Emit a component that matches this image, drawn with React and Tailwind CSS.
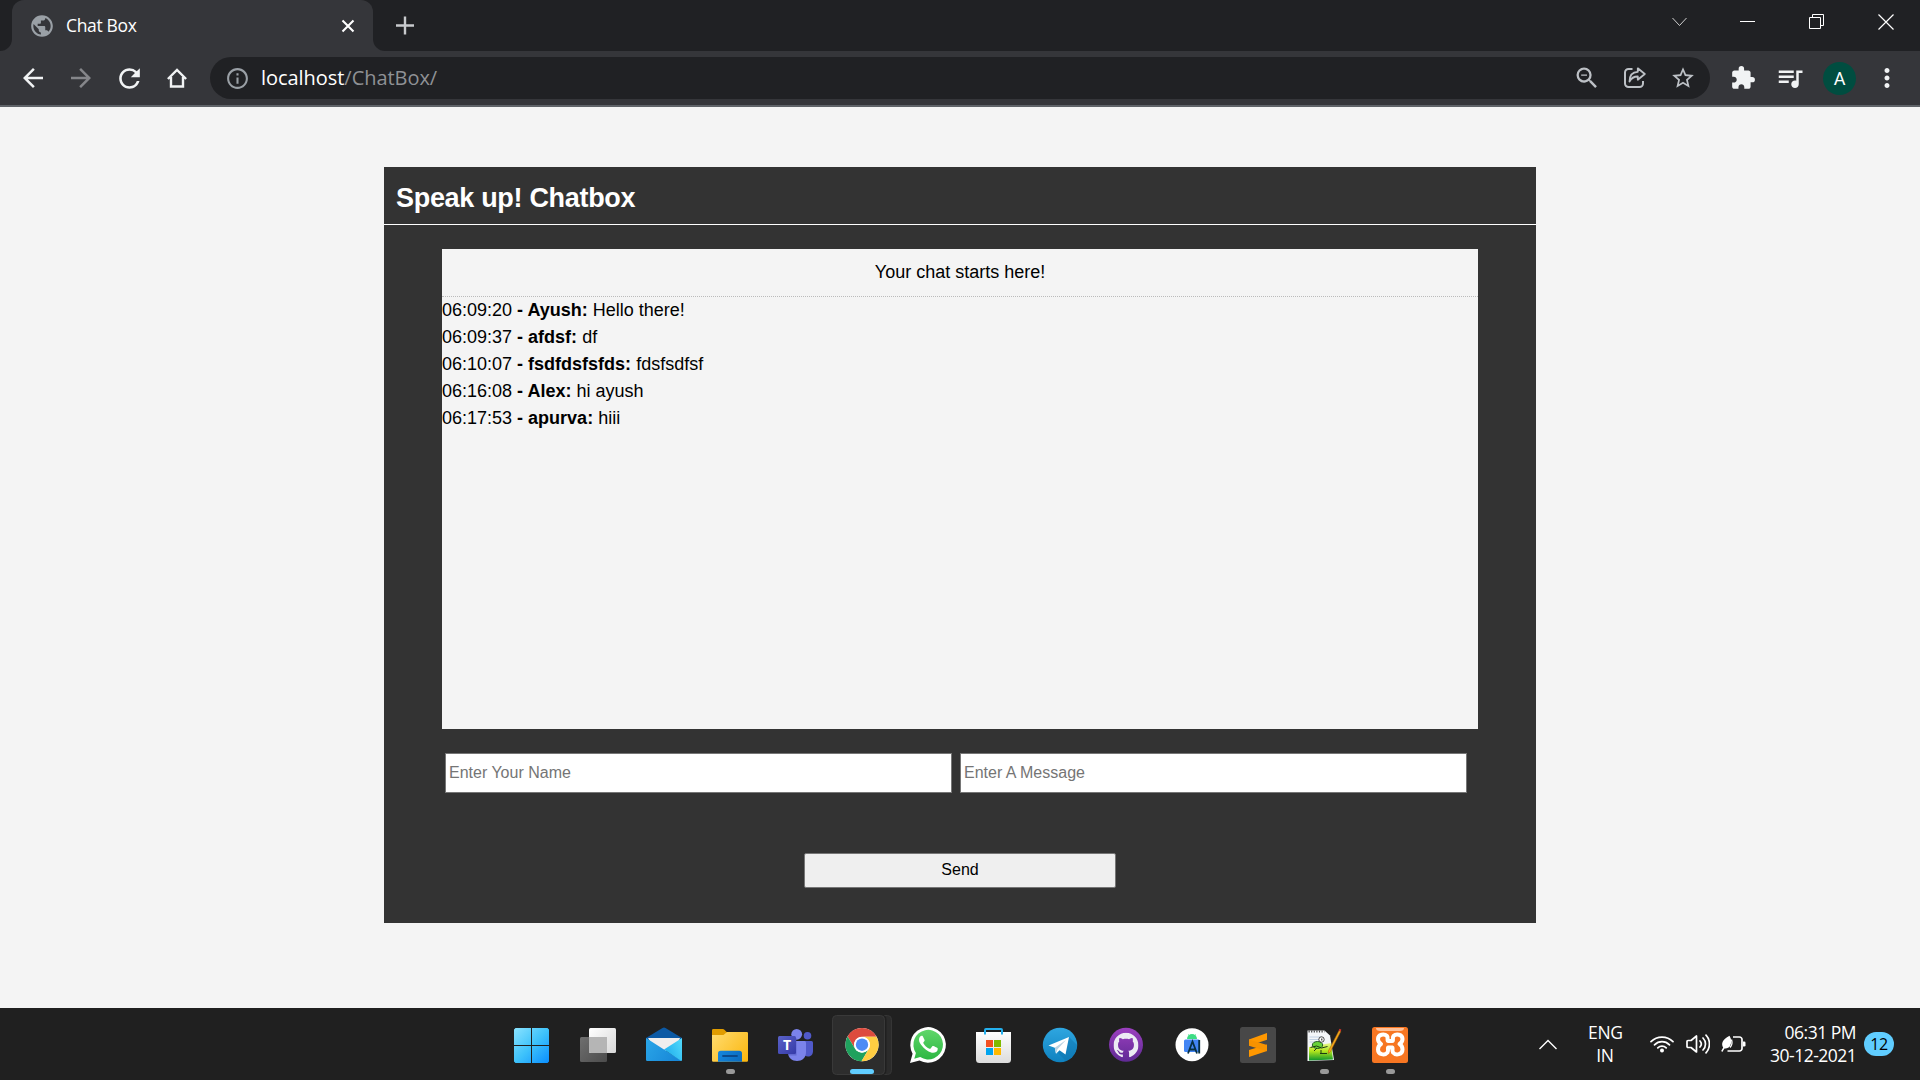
import React from "react";
import {
  MdArrowBack,
  MdArrowForward,
  MdRefresh,
  MdInfoOutline,
  MdZoomOut,
  MdStarBorder,
  MdExtension,
  MdQueueMusic,
  MdMoreVert,
  MdPublic,
} from "react-icons/md";
import { SiGithub } from "react-icons/si";

const messages = [
  { time: "06:09:20", name: "Ayush", text: "Hello there!" },
  { time: "06:09:37", name: "afdsf", text: "df" },
  { time: "06:10:07", name: "fsdfdsfsfds", text: "fdsfsdfsf" },
  { time: "06:16:08", name: "Alex", text: "hi ayush" },
  { time: "06:17:53", name: "apurva", text: "hiii" },
];

function TabStrip() {
  return (
    <div className="flex h-[51px] items-stretch bg-[#202124] text-white">
      <div className="flex w-3 items-end bg-[#35363a]">
        <div className="h-full w-full rounded-br-xl bg-[#202124]" />
      </div>
      <div className="bg-[#202124]">
        <div className="flex h-[51px] w-[361px] items-center rounded-t-xl bg-[#35363a] pl-[17px] pr-[18px]">
          <MdPublic className="size-[26px] text-[#9aa0a6]" />
          <span className="ml-[11px] pb-[2px] text-[17.5px] leading-[24px] tracking-[-0.35px] whitespace-nowrap">Chat Box</span>
          <svg className="ml-auto size-[14px]" viewBox="0 0 14 14" stroke="#fff" strokeWidth="2.1">
            <path d="M1.5 1.5l11 11M12.5 1.5l-11 11" />
          </svg>
        </div>
      </div>
      <div className="flex flex-1 bg-[#35363a]">
        <div className="flex flex-1 rounded-bl-xl bg-[#202124]">
          <svg className="mt-4 ml-[23px] h-[19px] w-[18px]" viewBox="0 0 18 19" stroke="#c8cacd" strokeWidth="2.4">
            <path d="M0 9.5h18M9 .5v18" />
          </svg>
          <div className="ml-auto flex h-[43px] items-center pr-[26px]">
            <svg className="mr-[53px] h-[10px] w-[15px]" viewBox="0 0 15 10" fill="none" stroke="#d0d0d0" strokeWidth="1">
              <path d="M.5 1l7 7.5 7-7.5" />
            </svg>
            <svg className="mr-[54px] h-[15px] w-[15px]" viewBox="0 0 15 15" fill="#fff">
              <path d="M0 7h15v1H0z" />
            </svg>
            <svg className="mr-[53px] size-[16px]" viewBox="0 0 16 16" fill="none" stroke="#fff">
              <path d="M.5 3.5h11v11H.5zM3.5 3.5v-3h11v11h-3" />
            </svg>
            <svg className="size-[16px]" viewBox="0 0 16 16" stroke="#fff" strokeWidth="1.2">
              <path d="M.5.5l15 15M15.5.5l-15 15" />
            </svg>
          </div>
        </div>
      </div>
    </div>
  );
}

function Toolbar() {
  return (
    <div className="flex h-[56px] items-start border-b-2 border-[#5f6368] bg-[#35363a] pt-[6px] text-[#f1f3f4]">
      <div className="flex h-[42px] items-center pl-[18px]">
        <MdArrowBack className="size-[30px]" />
        <MdArrowForward className="ml-[18px] size-[30px] text-[#85868a]" />
        <MdRefresh className="ml-[18px] size-[31px]" />
        <svg className="ml-[22px] size-[20px]" viewBox="0 0 20 20" fill="none" stroke="currentColor" strokeWidth="2.4">
          <path d="M.9 11L10 2l9.100 9M4 9v9.500h12V9" />
        </svg>
      </div>
      <div className="ml-[23px] flex h-[42px] w-[1500px] items-center rounded-full bg-[#202124] pl-[15px] pr-[14px]">
        <MdInfoOutline className="size-[25px] text-[#9aa0a6]" />
        <span className="ml-[11px] text-[20px] leading-[28px] tracking-[-0.05px] whitespace-nowrap text-white">
          localhost<span className="text-[#8f9195]">/ChatBox/</span>
        </span>
        <MdZoomOut className="ml-auto size-[28px] text-[#bdc1c6]" />
        <svg className="ml-[23px] size-[22px]" viewBox="0 0 22 22" fill="none" stroke="#bdc1c6" strokeWidth="2" strokeLinejoin="round">
          <path d="M8.500 2H4.500A3.500 3.500 0 0 0 1 5.500v11A3.500 3.500 0 0 0 4.500 20h11a3.500 3.500 0 0 0 3.500-3.500V14" />
          <path d="M5.500 14.500C5.500 8.500 8 5 13.800 4.800V1.300l7 5.700-7 5.700V9.500c-4 0-6.500 1.500-8.300 5z" strokeWidth="1.800" />
        </svg>
        <MdStarBorder className="ml-[24px] size-[26px] text-[#bdc1c6]" />
      </div>
      <div className="flex h-[42px] items-center">
        <MdExtension className="ml-[20px] size-[26px]" />
        <MdQueueMusic className="ml-[19px] size-[30px]" />
        <div className="ml-[18px] flex size-[33px] items-center justify-center rounded-full bg-[#004d40] font-[Roboto] text-[18px] text-white">
          A
        </div>
        <MdMoreVert className="ml-[16px] size-[30px]" />
      </div>
    </div>
  );
}

function ChatBox() {
  return (
    <main className="flex-1 bg-[#f4f4f4] pt-[60px] font-['Liberation_Sans',Arial,sans-serif]">
      <section className="mx-auto flex h-[756px] w-[1152px] flex-col bg-[#333333]">
        <header className="flex h-[58px] items-center border-b border-white pt-[5px] pl-3">
          <h1 className="text-[27px] leading-[32px] font-bold tracking-[-0.31px] whitespace-nowrap text-white">Speak up! Chatbox</h1>
        </header>
        <div className="mx-auto mt-6 h-[480px] w-[1036px] bg-[#f4f4f4] text-[18px] leading-[27px] text-black">
          <div className="flex h-12 items-center justify-center border-b border-dotted border-[#bbbbbb]">
            Your chat starts here!
          </div>
          <ul>
            {messages.map((m) => (
              <li key={m.time} className="h-[27px] leading-[26px] whitespace-nowrap">
                {m.time} <b>- {m.name}:</b> {m.text}
              </li>
            ))}
          </ul>
        </div>
        <form className="flex flex-col">
          <div className="mt-6 flex gap-2 pl-[61px]">
            <input
              className="h-10 w-[507px] border border-[#767676] bg-white px-[3px] text-[16px] placeholder:text-[#757575]"
              placeholder="Enter Your Name"
            />
            <input
              className="h-10 w-[507px] border border-[#767676] bg-white px-[3px] text-[16px] placeholder:text-[#757575]"
              placeholder="Enter A Message"
            />
          </div>
          <button
            type="button"
            className="mx-auto mt-[60px] h-[35px] w-[312px] rounded-[2px] border border-[#767676] bg-[#efefef] pb-[2px] text-[16px] text-black"
          >
            Send
          </button>
        </form>
      </section>
    </main>
  );
}

function Icon({ children, running }) {
  return (
    <svg className="h-[72px] w-[66px] shrink-0" viewBox="0 0 66 72" fill="none">
      {children}
      {running && <rect x="30" y="61" width="9" height="5" rx="2.5" fill="#999" />}
    </svg>
  );
}

function TaskbarApps() {
  return (
    <div className="flex pl-[498px]">
      {/* Start */}
      <Icon>
        <defs>
          <linearGradient id="win" x1="16" y1="20" x2="51" y2="55" gradientUnits="userSpaceOnUse">
            <stop stopColor="#8be3ff" />
            <stop offset=".5" stopColor="#3fc3fb" />
            <stop offset="1" stopColor="#0a8eff" />
          </linearGradient>
        </defs>
        <path d="M17.500 20H33v17H16V21.500zM34 20h15.500l1.500 1.500V37H34zM16 38h17v17H17.500L16 53.500zM34 38h17v15.500L49.500 55H34z" fill="url(#win)" />
      </Icon>
      {/* Task view */}
      <Icon>
        <defs>
          <linearGradient id="tvl" x1="25" y1="20" x2="52" y2="45" gradientUnits="userSpaceOnUse">
            <stop stopColor="#fff" />
            <stop offset="1" stopColor="#d8d8d8" />
          </linearGradient>
          <linearGradient id="tvd" x1="16" y1="29" x2="43" y2="54" gradientUnits="userSpaceOnUse">
            <stop stopColor="#6f6f6f" />
            <stop offset="1" stopColor="#4c4c4c" />
          </linearGradient>
        </defs>
        <rect x="16" y="29" width="27" height="25" rx="1.500" fill="url(#tvd)" />
        <rect x="25" y="20" width="27" height="25" rx="1.500" fill="url(#tvl)" />
        <path d="M25 29h18v16H26.500L25 43.500z" fill="#b5b5b5" />
      </Icon>
      {/* Mail */}
      <Icon>
        <defs>
          <linearGradient id="mail" x1="16" y1="30" x2="52" y2="53" gradientUnits="userSpaceOnUse">
            <stop stopColor="#2aa6e8" />
            <stop offset="1" stopColor="#1583d6" />
          </linearGradient>
          <linearGradient id="mail2" x1="36" y1="42" x2="52" y2="34" gradientUnits="userSpaceOnUse">
            <stop stopColor="#27b3ee" />
            <stop offset="1" stopColor="#4fd8fb" />
          </linearGradient>
        </defs>
        <path d="M16 30l16.500-10q1.500-.8 3 0L52 30v4H16z" fill="#0c59a4" />
        <path d="M18 30h32l-2 5-14 9-13-9z" fill="#f0eeee" />
        <path d="M16 30l36 23H17.200A1.200 1.200 0 0 1 16 51.800z" fill="url(#mail)" />
        <path d="M52 30v21.800a1.200 1.200 0 0 1-.8 1.100L34 41.500z" fill="url(#mail2)" />
      </Icon>
      {/* File explorer */}
      <Icon running>
        <defs>
          <linearGradient id="fold" x1="16" y1="24" x2="52" y2="54" gradientUnits="userSpaceOnUse">
            <stop stopColor="#ffdc70" />
            <stop offset="1" stopColor="#fbb60d" />
          </linearGradient>
          <linearGradient id="foldb" x1="22" y1="43" x2="44" y2="54" gradientUnits="userSpaceOnUse">
            <stop stopColor="#1587dd" />
            <stop offset="1" stopColor="#0a6cc0" />
          </linearGradient>
        </defs>
        <path d="M16 22.200a1.200 1.200 0 0 1 1.200-1.200h9.500q1 0 2 1l3 3V34H16z" fill="#e09c00" />
        <path d="M16 27h11.500l3.500-3h19.800a1.200 1.200 0 0 1 1.200 1.200v27.300a1.200 1.200 0 0 1-1.200 1.200H17.200A1.200 1.200 0 0 1 16 52.500z" fill="url(#fold)" />
        <path d="M22 53.700V45.500a2.700 2.700 0 0 1 2.700-2.700h18.600a2.700 2.700 0 0 1 2.700 2.700v8.200z" fill="url(#foldb)" />
        <path d="M27 48h14" stroke="#0a4a8c" strokeWidth="1.800" strokeLinecap="round" />
      </Icon>
      {/* Teams */}
      <Icon>
        <defs>
          <linearGradient id="tms" x1="16" y1="28" x2="34" y2="46" gradientUnits="userSpaceOnUse">
            <stop stopColor="#5a62c8" />
            <stop offset="1" stopColor="#353aa8" />
          </linearGradient>
        </defs>
        <circle cx="45.500" cy="27.700" r="3.800" fill="#5059c9" />
        <path d="M40 33h9.500A1.500 1.500 0 0 1 51 34.500V43c0 7-8 7-11 2z" fill="#5059c9" />
        <circle cx="34.700" cy="26.300" r="5.400" fill="#7b83eb" />
        <path d="M26 33h16.500A1.500 1.500 0 0 1 44 34.500V44c0 6-4 9-9 9s-9-3-9-9z" fill="#7b83eb" />
        <path d="M27 30h7.500v17.500H26.300z" fill="#4a50b8" opacity=".5" />
        <rect x="16" y="28" width="18" height="18" rx="1.500" fill="url(#tms)" />
        <text x="25" y="42" textAnchor="middle" fontSize="14" fontWeight="700" fill="#fff" fontFamily="Open Sans, sans-serif">T</text>
      </Icon>
      {/* Chrome, active */}
      <Icon>
        <rect x="44" y="7.500" width="19.500" height="59" rx="4" fill="#2b2b2b" stroke="#353535" />
        <rect x="3.500" y="6.500" width="55" height="61" rx="5" fill="#202020" />
        <rect x="4.500" y="7.500" width="52" height="59" rx="4" fill="#2d2d2d" stroke="#393939" />
        <circle cx="34" cy="36.700" r="16.600" fill="#fff" />
        <path d="M34 28.700h14.500A16.600 16.600 0 0 0 19.600 28.400l7.500 12.300A8 8 0 0 1 34 28.700z" fill="#dd4b3e" />
        <path d="M27.100 40.700L19.600 28.400A16.600 16.600 0 0 0 33.500 53.300l7.400-12.600a8 8 0 0 1-13.800 0z" fill="#1fa15d" />
        <path d="M34 28.700h14.500A16.600 16.600 0 0 1 33.500 53.300l7.400-12.600A8 8 0 0 0 34 28.700z" fill="#ffcd42" />
        <circle cx="34" cy="36.700" r="7.800" fill="#fff" />
        <circle cx="34" cy="36.700" r="6.200" fill="#4c8bf5" />
        <rect x="22" y="61" width="24" height="5" rx="2.500" fill="#60cdff" />
      </Icon>
      {/* WhatsApp */}
      <Icon>
        <defs>
          <linearGradient id="wa" x1="34" y1="22" x2="34" y2="52" gradientUnits="userSpaceOnUse">
            <stop stopColor="#5fd669" />
            <stop offset="1" stopColor="#2cb742" />
          </linearGradient>
        </defs>
        <path d="M16 55l2.600-9.300A17.800 17.800 0 1 1 25.500 52.500z" fill="#fff" />
        <path d="M20.300 50.700l1.600-5.800A14.800 14.800 0 1 1 26.200 49.100z" fill="url(#wa)" />
        <path d="M28.900 28.500c-.4-.8-.7-.8-1.200-.8-1 0-2.700 1.300-2.700 4 0 2.200 1.700 4.600 2.500 5.600 2.700 3.600 5.700 6.200 10.300 7.400 2.800.7 5.300-1 5.700-2.400.3-1.200.3-2 0-2.200-.7-.5-3.400-1.800-4.200-2-.5-.1-.8 0-1.200.5l-1.500 1.900c-.4.400-.7.400-1.200.2-2.700-1.200-4.600-3-6-5.400-.3-.5-.2-.8.100-1.100.9-1 1.300-1.600 1.100-2.300z" fill="#fff" />
      </Icon>
      {/* Microsoft Store */}
      <Icon>
        <defs>
          <linearGradient id="bag" x1="34" y1="24" x2="34" y2="55" gradientUnits="userSpaceOnUse">
            <stop stopColor="#fff" />
            <stop offset="1" stopColor="#dcdcdc" />
          </linearGradient>
        </defs>
        <path d="M16 24h35v27.500a3.500 3.500 0 0 1-3.500 3.500h-28a3.500 3.500 0 0 1-3.500-3.500z" fill="url(#bag)" />
        <path d="M25 26.500V22a1 1 0 0 1 1-1h15a1 1 0 0 1 1 1v4.500" stroke="#24b0ee" strokeWidth="2" />
        <path d="M26 32h7v7h-7z" fill="#f25022" />
        <path d="M34 32h7v7h-7z" fill="#7fba00" />
        <path d="M26 40h7v7h-7z" fill="#00a4ef" />
        <path d="M34 40h7v7h-7z" fill="#ffb900" />
      </Icon>
      {/* Telegram */}
      <Icon>
        <defs>
          <linearGradient id="tg" x1="34" y1="20" x2="34" y2="54" gradientUnits="userSpaceOnUse">
            <stop stopColor="#2ea6e0" />
            <stop offset="1" stopColor="#0f82c0" />
          </linearGradient>
        </defs>
        <circle cx="34" cy="37" r="17.200" fill="url(#tg)" />
        <path d="M43 29l8 8c0 8-6 14-11 16l-8-8z" fill="#0d6fa8" opacity=".4" />
        <path d="M22.500 37.500L43 29l-3.500 17.500-6-4.200-3.500 3.500-1.200-6z" fill="#fff" />
        <path d="M28.800 39.800L40 32l-8.500 9.300-1.500 4.500z" fill="#b9d3e3" />
      </Icon>
      {/* GitHub Desktop */}
      <Icon>
        <defs>
          <linearGradient id="gh" x1="34" y1="20" x2="34" y2="54" gradientUnits="userSpaceOnUse">
            <stop stopColor="#9b3fbf" />
            <stop offset="1" stopColor="#5f2a94" />
          </linearGradient>
        </defs>
        <circle cx="34" cy="36.700" r="17" fill="url(#gh)" />
        <SiGithub x="21.500" y="24.500" size={25} color="#ececf4" />
      </Icon>
      {/* Android Studio */}
      <Icon>
        <circle cx="34" cy="36.700" r="16.500" fill="#fff" />
        <path d="M29 31a5 5 0 0 1 10 0z" fill="#3ddc84" />
        <path d="M30.500 26.500l1 1.600M37.500 26.500l-1 1.600" stroke="#3ddc84" />
        <rect x="26" y="31.500" width="16" height="12.500" rx="1.500" fill="#4285f4" />
        <path d="M30 45.500l4.500-12 4.500 12M31.500 41.500h6" stroke="#073042" strokeWidth="1.800" />
        <path d="M41.200 32v13.500" stroke="#073042" strokeWidth="1.900" />
      </Icon>
      {/* Sublime Text */}
      <Icon>
        <rect x="16" y="19" width="36" height="36" rx="2.500" fill="#484848" />
        <path d="M25 31.500L43 25v6.800l-18 6z" fill="#ff9800" />
        <path d="M25 42L43 36.500v6.500L25 49z" fill="#ff9800" />
        <path d="M25 31.500L43 37v6.300l-18-5.500z" fill="#f79200" />
      </Icon>
      {/* Notepad++ */}
      <Icon running>
        <defs>
          <linearGradient id="npp" x1="30" y1="34" x2="30" y2="52" gradientUnits="userSpaceOnUse">
            <stop stopColor="#f2fb9c" />
            <stop offset=".5" stopColor="#b5e61d" />
            <stop offset="1" stopColor="#159a2c" />
          </linearGradient>
        </defs>
        <path d="M17.500 22.500H34.500L40 27.500l4 24.500-26.500 1z" fill="#f4f6f8" />
        <path d="M18.500 23.500h16" stroke="#444" strokeWidth="2" strokeDasharray="1.200 1.400" />
        <path d="M19.500 29h12M19.500 31.500h10M19.500 34h8" stroke="#b5c9de" strokeWidth=".8" />
        <path d="M19 39l22-4 2 16.500-24 1z" fill="url(#npp)" />
        <ellipse cx="27.500" cy="37" rx="5.200" ry="3.500" fill="#68d13a" stroke="#17501b" strokeWidth=".9" />
        <circle cx="31.500" cy="31.500" r="2.700" fill="#fff" stroke="#222" strokeWidth=".8" />
        <path d="M31.800 30.500v2" stroke="#222" strokeWidth="1.100" />
        <path d="M20.500 39.500l6-1.500 5 2 6-1.500M24 43l3-3M30 45.500h7M31 42v4" stroke="#1d3b12" strokeWidth="1" />
        <path d="M49 22.500l1.800 1-10.500 20.300-2 1.700.2-2.700z" fill="#f4a91c" stroke="#a35d0a" strokeWidth=".5" />
        <path d="M48.600 22.500l1-1.700 1.800 1-.9 1.700z" fill="#d9362b" />
      </Icon>
      {/* XAMPP */}
      <Icon running>
        <rect x="16" y="19" width="36" height="36" rx="2.500" fill="#f77622" />
        <path d="M20 20h28q0 3-4 3H24q-4 0-4-3z" fill="#ffc29a" />
        <path
          d="M31 28c-2.500-2.500-9-2-9 3 0 2.500 1 3.800 3 5-2 1.200-3 2.800-3 5.500 0 5 6.500 6.500 9.500 3 1.500-2.500-.5-4.500 1-5h3.500c1.500.5-.5 2.500 1 5 3 3.500 9.500 2 9.500-3 0-2.700-1-4.300-3-5.500 2-1.200 3-2.500 3-5 0-5-6.500-5.500-9-3-1.500 2 .5 4.800-1.500 5h-3.500c-2-.2 0-3-1.500-5z"
          stroke="#fff"
          strokeWidth="4"
          strokeLinejoin="round"
        />
      </Icon>
    </div>
  );
}

function Tray() {
  return (
    <div className="ml-auto flex h-[72px] items-center text-[17px] text-white">
      <svg className="mr-[31px] h-[11px] w-[18px]" viewBox="0 0 18 11" fill="none" stroke="#fff" strokeWidth="1.400">
        <path d="M.5 10L9 1.500l8.500 8.500" />
      </svg>
      <div className="w-[34px] text-center text-[17.5px] leading-[23px] tracking-[-0.3px] whitespace-nowrap">
        ENG
        <br />
        IN
      </div>
      <svg className="ml-[28px] h-[18px] w-[24px]" viewBox="0 0 24 18" fill="none" stroke="#fff" strokeWidth="1.700" strokeLinecap="round">
        <path d="M1 6.700a15.500 15.500 0 0 1 22 0M4.500 9.800a10.600 10.600 0 0 1 15 0M7.800 12.800a6 6 0 0 1 8.400 0" />
        <circle cx="12" cy="15.500" r="2" fill="#fff" stroke="none" />
      </svg>
      <svg className="ml-[12px] h-[20px] w-[24px]" viewBox="0 0 24 20" fill="none" stroke="#fff" strokeWidth="1.700" strokeLinecap="round" strokeLinejoin="round">
        <path d="M1 7.500a1 1 0 0 1 1-1h3L10.500 2v16L5 13.500H2a1 1 0 0 1-1-1zM14 7a4.500 4.500 0 0 1 0 6M17 4a8.500 8.500 0 0 1 0 12M20 1.200a13 13 0 0 1 0 17.600" />
      </svg>
      <svg className="ml-[11px] h-[18px] w-[25px]" viewBox="0 0 25 18" fill="none" stroke="#fff" strokeWidth="1.700" strokeLinejoin="round">
        <path d="M12 2h6.500A2.500 2.500 0 0 1 21 4.500v9a2.500 2.500 0 0 1-2.500 2.500H6.500" />
        <path d="M22 6.500h1.200q1.300 0 1.300 1.200v2.600q0 1.200-1.300 1.200H22z" fill="#fff" stroke="none" />
        <path d="M8.500.8c2 3.200 2.300 7 .7 10-1.200 2.200-3.500 3-5.700 2.700L1.300 17 .2 16l2-3.400C0 9 1 4.500 8.500.8z" fill="#fff" stroke="none" />
        <path d="M10.500 4.500q1.500 5-1.500 8" strokeWidth="1.300" />
      </svg>
      <div className="ml-[24px] w-[86px] text-right text-[17.5px] leading-[23px] tracking-[-0.5px] whitespace-nowrap">
        06:31 PM
        <br />
        30-12-2021
      </div>
      <div className="mr-[26px] ml-[8px] flex h-6 w-[30px] items-center justify-center rounded-full bg-[#60cdff] text-[16px] tracking-[-0.4px] text-black">
        12
      </div>
    </div>
  );
}

export default function App() {
  return (
    <div className="flex h-[1080px] w-[1920px] flex-col overflow-hidden font-['Open_Sans','Noto_Sans',sans-serif]">
      <TabStrip />
      <Toolbar />
      <ChatBox />
      <footer className="flex h-[72px] bg-[#202020]">
        <TaskbarApps />
        <Tray />
      </footer>
    </div>
  );
}
